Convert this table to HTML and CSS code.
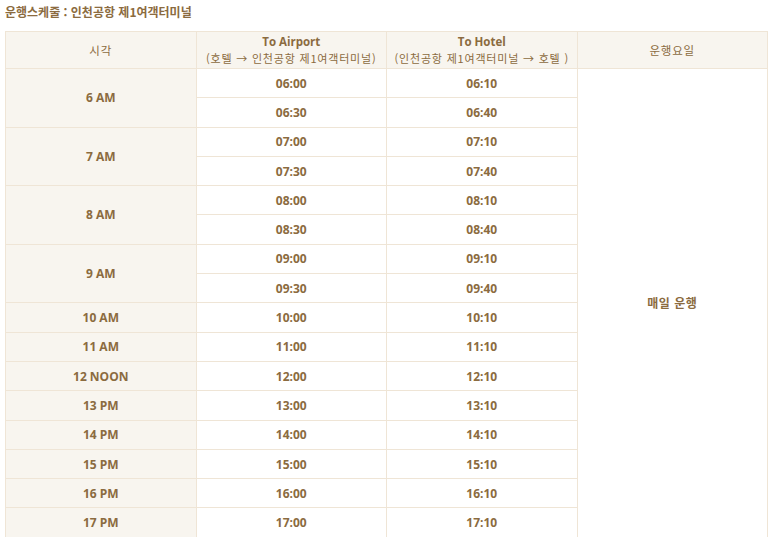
FILE: index.html
```html
<!DOCTYPE html>
<html lang="ko">
<head>
<meta charset="utf-8">
<title>운행스케줄</title>
<link rel="stylesheet" href="styles.css">
</head>
<body>
<h2 class="title">운행스케줄 : 인천공항 제1여객터미널</h2>
<table class="schedule">
  <colgroup><col class="c"><col class="c"><col class="c"><col class="c"></colgroup>
  <thead>
    <tr>
      <th>시각</th>
      <th><span class="dest">To Airport</span><span class="route">(호텔 → 인천공항 제1여객터미널)</span></th>
      <th><span class="dest">To Hotel</span><span class="route">(인천공항 제1여객터미널 → 호텔 )</span></th>
      <th>운행요일</th>
    </tr>
  </thead>
  <tbody>
    <tr><td class="hour" rowspan="2">6 AM</td><td>06:00</td><td>06:10</td><td class="days" rowspan="16">매일 운행</td></tr>
    <tr><td>06:30</td><td>06:40</td></tr>
    <tr><td class="hour" rowspan="2">7 AM</td><td>07:00</td><td>07:10</td></tr>
    <tr><td>07:30</td><td>07:40</td></tr>
    <tr><td class="hour" rowspan="2">8 AM</td><td>08:00</td><td>08:10</td></tr>
    <tr><td>08:30</td><td>08:40</td></tr>
    <tr><td class="hour" rowspan="2">9 AM</td><td>09:00</td><td>09:10</td></tr>
    <tr><td>09:30</td><td>09:40</td></tr>
    <tr><td class="hour">10 AM</td><td>10:00</td><td>10:10</td></tr>
    <tr><td class="hour">11 AM</td><td>11:00</td><td>11:10</td></tr>
    <tr><td class="hour">12 NOON</td><td>12:00</td><td>12:10</td></tr>
    <tr><td class="hour">13 PM</td><td>13:00</td><td>13:10</td></tr>
    <tr><td class="hour">14 PM</td><td>14:00</td><td>14:10</td></tr>
    <tr><td class="hour">15 PM</td><td>15:00</td><td>15:10</td></tr>
    <tr><td class="hour">16 PM</td><td>16:00</td><td>16:10</td></tr>
    <tr><td class="hour">17 PM</td><td>17:00</td><td>17:10</td></tr>
  </tbody>
</table>
</body>
</html>
```
FILE: styles.css
```css
html, body {
  background: #ffffff;
}
body {
  margin: 0;
  padding: 0 5px;
  font-family: "Open Sans", "Noto Sans CJK KR", sans-serif;
  color: #8b6b40;
}
.title {
  margin: 0;
  padding-top: 4px;
  height: 27px;
  font-size: 12px;
  line-height: 16px;
  font-weight: 700;
  color: #8b6b40;
  font-family: "Noto Sans CJK KR", sans-serif;
}
.schedule {
  width: 763px;
  border-collapse: collapse;
  table-layout: fixed;
  font-size: 12px;
}
.schedule th,
.schedule td {
  border: 1px solid #efe5d6;
  text-align: center;
  vertical-align: middle;
  padding: 0;
  font-weight: 700;
}
.schedule thead th {
  background: #f8f5ef;
  height: 36px;
  font-weight: 400;
  font-size: 11.5px;
  letter-spacing: 0.8px;
  font-family: "Noto Sans CJK KR", sans-serif;
  line-height: 16px;
}
.dest {
  display: block;
  font-weight: 700;
  letter-spacing: 0;
  font-family: "Open Sans", "Noto Sans CJK KR", sans-serif;
  font-size: 11.5px;
}
.route {
  display: block;
  font-size: 11px;
  letter-spacing: 0.8px;
}
.schedule tbody tr {
  height: 29.3px;
}
.schedule td.hour {
  background: #f8f5ef;
}
.schedule td.days {
  background: #ffffff;
  font-family: "Noto Sans CJK KR", sans-serif;
  font-size: 12px;
  letter-spacing: 0.5px;
}
```
